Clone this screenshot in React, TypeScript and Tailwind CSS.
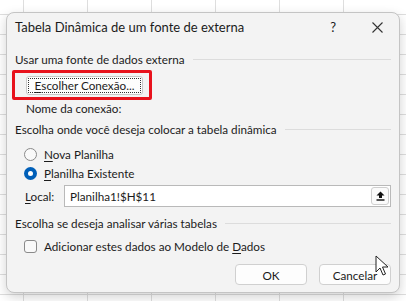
import * as React from "react";

function SectionTitle({ children }: { children: React.ReactNode }) {
  return (
    <div className="flex h-[16px] items-center gap-2 pl-[8px] pr-[8px]">
      <span className="whitespace-nowrap">{children}</span>
      <span className="h-px flex-1 bg-[#dcdcdc]" />
    </div>
  );
}

function U({ children }: { children: React.ReactNode }) {
  return <span className="underline underline-offset-2">{children}</span>;
}

export default function App() {
  return (
    <div className="h-[301px] w-[406px] overflow-hidden bg-white bg-[linear-gradient(to_right,#dedede_1px,transparent_1px),linear-gradient(to_bottom,#dedede_1px,transparent_1px)] bg-[size:64px_20px] bg-[position:23px_14px] pl-[6px] pt-[12px] font-['Lato',sans-serif] text-[11.7px] leading-[16px] text-[#1b1b1b]">
      <div className="relative flex h-[281px] w-[394px] flex-col rounded-[8px] border border-[#c4c4c4] bg-[#f3f3f3] shadow-[0_4px_12px_rgba(0,0,0,0.18)]">
        {/* title bar */}
        <div className="flex h-[27px] items-center pl-[8px] pr-[16px] pt-[1px]">
          <span className="flex-1 text-[13px]">Tabela Dinâmica de um fonte de externa</span>
          <span className="mr-[36px] text-[13px]">?</span>
          <svg width="11" height="11" viewBox="0 0 11 11" aria-hidden>
            <path d="M0.5 0.5 L10.5 10.5 M10.5 0.5 L0.5 10.5" stroke="#333" strokeWidth="1.1" />
          </svg>
        </div>

        <div className="mt-[11px]">
          <SectionTitle>Usar uma fonte de dados externa</SectionTitle>
        </div>

        {/* highlighted connection button */}
        <div className="ml-[5px] mt-[3px] flex h-[30px] w-[140px] items-center rounded-[2px] border-[3px] border-[#e8121c] pl-[11px]">
          <button
            type="button"
            className="flex h-[19px] w-[117px] items-center justify-center rounded-[3px] border border-[#c8c8c8] bg-[#fdfdfd] outline outline-1 -outline-offset-[3px] outline-dotted outline-[#333]"
          >
            <U>E</U>scolher Conexão...
          </button>
        </div>

        <div className="h-[16px] pl-[19px]">Nome da conexão:</div>

        <div className="mt-[5px]">
          <SectionTitle>Escolha onde você deseja colocar a tabela dinâmica</SectionTitle>
        </div>

        <div className="mt-[9px] flex flex-col gap-[3px] pl-[17px]">
          <label className="flex h-[16px] items-center gap-[7px]">
            <span className="size-[13px] rounded-full border border-[#8a8a8a] bg-[#f9f9f9]" />
            <span>
              <U>N</U>ova Planilha
            </span>
          </label>
          <label className="flex h-[16px] items-center gap-[7px]">
            <span className="flex size-[13px] items-center justify-center rounded-full bg-[#005fb8]">
              <span className="size-[5px] rounded-full bg-white" />
            </span>
            <span>
              <U>P</U>lanilha Existente
            </span>
          </label>
        </div>

        <div className="mt-[4px] flex items-center pl-[18px] pr-[8px]">
          <span className="w-[39px]">
            <U>L</U>ocal:
          </span>
          <div className="flex h-[22px] flex-1 items-center border border-[#b9b9b9] bg-white pl-[5px] pr-[1px]">
            <span className="flex-1">Planilha1!$H$11</span>
            <span className="flex h-[18px] w-[18px] items-center justify-center rounded-[3px] border border-[#cfcfcf] bg-[#fbfbfb]">
              <svg width="9" height="10" viewBox="0 0 9 10" aria-hidden>
                <path d="M4.5 0.5 L8.5 4.5 H6 V7 H3 V4.5 H0.5 Z" fill="#111" />
                <rect x="0.5" y="8.3" width="8" height="1.4" fill="#111" />
              </svg>
            </span>
          </div>
        </div>

        <div className="mt-[8px]">
          <SectionTitle>Escolha se deseja analisar várias tabelas</SectionTitle>
        </div>

        <label className="mt-[7px] flex h-[16px] items-center gap-[7px] pl-[17px]">
          <span className="size-[13px] rounded-[3px] border border-[#8a8a8a] bg-[#f9f9f9]" />
          <span>
            Adicionar estes dados ao Modelo de <U>D</U>ados
          </span>
        </label>

        <div className="mt-[10px] flex justify-end gap-[12px] pr-[8px]">
          <button
            type="button"
            className="h-[21px] w-[72px] rounded-[4px] border border-[#d0d0d0] bg-[#fdfdfd]"
          >
            OK
          </button>
          <button
            type="button"
            className="h-[21px] w-[72px] rounded-[4px] border border-[#d0d0d0] bg-[#fdfdfd]"
          >
            Cancelar
          </button>
        </div>

        {/* mouse pointer */}
        <svg
          className="absolute left-[368px] top-[242px]"
          width="14"
          height="22"
          viewBox="0 0 14 22"
          aria-hidden
        >
          <path
            d="M1 1 L1 17 L5 13 L8 20 L10.5 19 L7.5 12 L13 12 Z"
            fill="#fff"
            stroke="#222"
            strokeWidth="1"
            strokeLinejoin="round"
          />
        </svg>
      </div>
    </div>
  );
}
